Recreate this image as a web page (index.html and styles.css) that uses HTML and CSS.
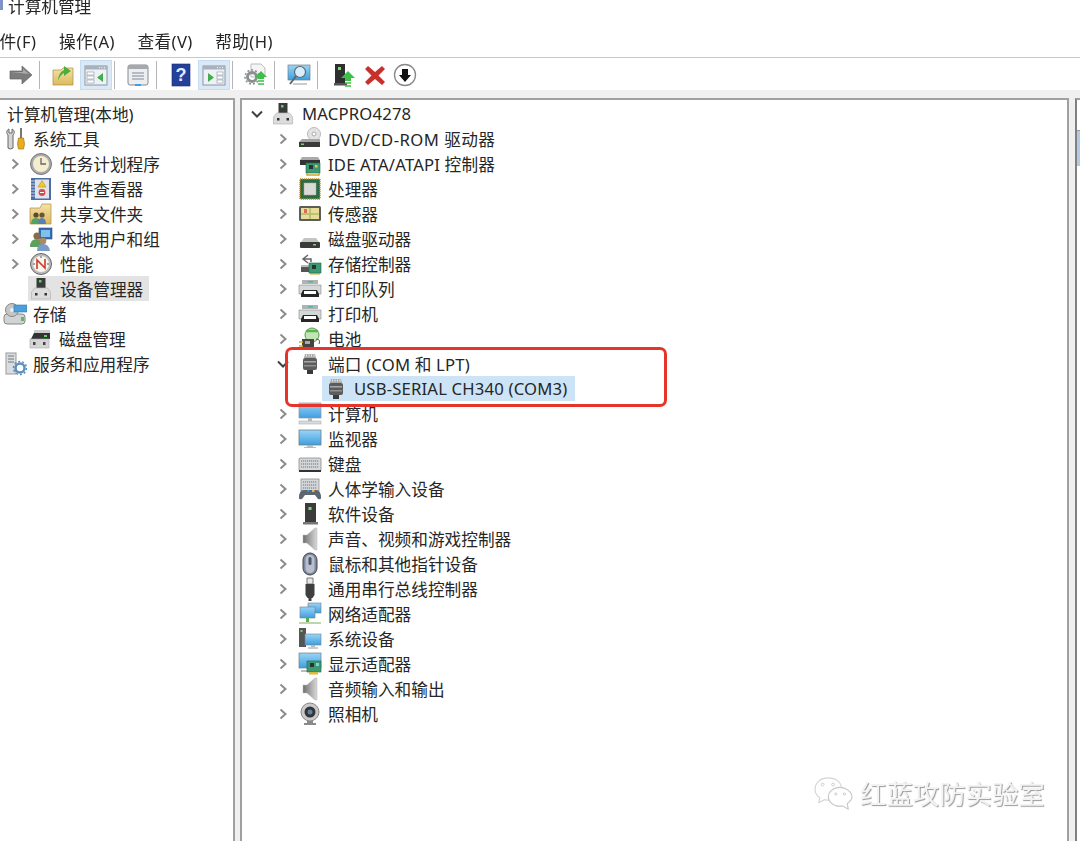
FILE: index.html
```html
<!DOCTYPE html>
<html lang="zh-CN">
<head>
<meta charset="utf-8">
<title>计算机管理</title>
<link rel="stylesheet" href="styles.css">
</head>
<body>
<svg class="sprite" xmlns="http://www.w3.org/2000/svg">
  <defs>
    <linearGradient id="gBlue" x1="0" y1="0" x2="0" y2="1"><stop offset="0" stop-color="#9ad4f5"/><stop offset="1" stop-color="#3d9fe0"/></linearGradient>
    <linearGradient id="gGray" x1="0" y1="0" x2="1" y2="0"><stop offset="0" stop-color="#6e6e6e"/><stop offset=".6" stop-color="#b0b0b0"/><stop offset="1" stop-color="#d8d8d8"/></linearGradient>
    <linearGradient id="gFolder" x1="0" y1="0" x2="0" y2="1"><stop offset="0" stop-color="#f3e2a8"/><stop offset="1" stop-color="#dcb95f"/></linearGradient>
  </defs>
  <symbol id="chev" viewBox="0 0 16 16"><path d="M5.500 3.500 10.500 8 5.500 12.500" fill="none" stroke="#8c8c8c" stroke-width="2"/></symbol>
  <symbol id="chevd" viewBox="0 0 16 16"><path d="M3 5.500 8 10.500 13 5.500" fill="none" stroke="#404040" stroke-width="2"/></symbol>

  <symbol id="computer" viewBox="0 0 24 24"><rect x="7.500" y="1" width="9" height="10" fill="#3a3a3a"/><rect x="10" y="3" width="2.500" height="2.500" fill="#5fd35f"/><path d="M2.500 22v-7l3-4h13l3 4v7z" fill="#dcdcdc" stroke="#b5b5b5" stroke-width=".7"/><rect x="6" y="16" width="2.500" height="2.500" fill="#333"/><rect x="15.500" y="16" width="2.500" height="2.500" fill="#333"/></symbol>
  <symbol id="tools" viewBox="0 0 24 24"><path d="M6 2C3.500 3 3 6 5 8v13q2.500 2 5 0V8c2-2 1.500-5-1-6v4H6z" fill="#d4d4d4" stroke="#666"/><rect x="17" y="1" width="2" height="10" fill="#777"/><path d="M15.500 11h5l1 6-1 5h-5l-1-5z" fill="#e9ad1f" stroke="#a87710" stroke-width=".7"/></symbol>
  <symbol id="clock" viewBox="0 0 24 24"><circle cx="12" cy="12" r="10.500" fill="#aaa" stroke="#777"/><circle cx="12" cy="12" r="8" fill="#f6edd0"/><path d="M12 6v6h5" fill="none" stroke="#666" stroke-width="1.300"/></symbol>
  <symbol id="log" viewBox="0 0 24 24"><rect x="2" y="1" width="20" height="22" fill="#4d6da8"/><rect x="6" y="2.500" width="14" height="19" fill="#dfe4ea"/><path d="M2 4h4M2 7h4M2 10h4M2 13h4M2 16h4M2 19h4" stroke="#c9d0dd" stroke-width="1"/><path d="M13 3.500 17 10H9z" fill="#f1c832" stroke="#a58a10" stroke-width=".5"/><circle cx="13" cy="15.500" r="3.400" fill="#d64b4b"/><rect x="11" y="15" width="4" height="1" fill="#fff"/></symbol>
  <symbol id="share" viewBox="0 0 24 24"><path d="M1 22V6h10l2-4h9v20z" fill="url(#gFolder)" stroke="#b08d3c" stroke-width=".7"/><circle cx="7" cy="13" r="2.600" fill="#5a4a2f"/><path d="M2 22q0-6 5-6t5 6z" fill="#54a35c"/><circle cx="13" cy="13" r="2.600" fill="#6a553a"/><path d="M9 22q0-6 4-6t4 6z" fill="#5b7fb5"/></symbol>
  <symbol id="users" viewBox="0 0 24 24"><rect x="10" y="1" width="13" height="11" fill="#2e6fbd" stroke="#446" stroke-width=".6"/><rect x="12" y="3" width="9" height="7" fill="#7fc0ee"/><circle cx="8" cy="9" r="3.600" fill="#8a6a4a"/><path d="M1 20q0-8 7-8t7 8z" fill="#5ea05a"/><circle cx="14" cy="14" r="3.300" fill="#b08a5f"/><path d="M8 24q0-7 6-7t7 7z" fill="#7a9ac8"/></symbol>
  <symbol id="perf" viewBox="0 0 24 24"><circle cx="12" cy="12" r="10.500" fill="#bbb" stroke="#666"/><circle cx="12" cy="12" r="8" fill="#f6f6ee"/><path d="M8 17V8l8 8V7" fill="none" stroke="#cc3a30" stroke-width="1.600"/><path d="M12 4v2M4 12h2M20 12h-2" stroke="#555"/></symbol>
  <symbol id="storage" viewBox="0 0 24 24"><rect x="1" y="12" width="21" height="10" rx="3" fill="#d0d4d4" stroke="#888"/><circle cx="9" cy="8" r="6.500" fill="#c6c6c6" stroke="#888"/><circle cx="9" cy="8" r="2" fill="#eee"/><rect x="11" y="3" width="13" height="7" fill="#4aa0dc" stroke="#2f77ad" stroke-width=".6"/><rect x="18" y="15" width="3" height="4" fill="#5fb85f"/></symbol>
  <symbol id="diskm" viewBox="0 0 24 24"><path d="M3 12l3-6h16v6z" fill="#333"/><path d="M6 3h16v3H6z" fill="#ccc"/><rect x="16" y="8" width="3" height="2" fill="#66d066"/><rect x="2" y="12" width="19" height="9" fill="#d5d5d5" stroke="#aaa" stroke-width=".6"/><rect x="5" y="15" width="2.500" height="3" fill="#444"/><rect x="15" y="15" width="2.500" height="3" fill="#444"/></symbol>
  <symbol id="services" viewBox="0 0 24 24"><rect x="3" y="1" width="10" height="21" fill="#d9dde0" stroke="#999"/><path d="M5 4h6M5 7h6M5 10h6" stroke="#777"/><circle cx="17" cy="16" r="4.500" fill="none" stroke="#5d8fc0" stroke-width="2.500"/><circle cx="17" cy="16" r="6.500" fill="none" stroke="#5d8fc0" stroke-width="1.500" stroke-dasharray="2 2"/></symbol>

  <symbol id="dvd" viewBox="0 0 24 24"><circle cx="16" cy="7" r="6.500" fill="#e3e3e3" stroke="#bbb"/><circle cx="16" cy="7" r="2" fill="#fff" stroke="#aaa"/><path d="M1 15l3-3h18v3z" fill="#a5a5a5"/><rect x="1" y="15" width="21" height="5" fill="#3a3a3a"/><rect x="3" y="16.500" width="3" height="1.500" fill="#6fd66f"/></symbol>
  <symbol id="ide" viewBox="0 0 24 24"><path d="M2 8l2-3h16l2 3z" fill="#aaa"/><rect x="2" y="8" width="20" height="5" fill="#333"/><rect x="8" y="11" width="14" height="10" fill="#3b9a72" stroke="#1f6a4a" stroke-width=".6"/><rect x="11" y="13" width="4" height="4" fill="#24343a"/><rect x="17" y="13" width="2.500" height="2.500" fill="#e8c53c"/><path d="M9 21v2h12v-2" fill="none" stroke="#c9a32d" stroke-width="1.500"/></symbol>
  <symbol id="cpu" viewBox="0 0 24 24"><rect x="2" y="2" width="20" height="20" fill="#2c6a45" stroke="#b58f2a" stroke-width="1.400" stroke-dasharray="1.300 .7"/><rect x="6" y="6" width="12" height="12" fill="#d9d9d5" stroke="#aaa" stroke-width=".5"/></symbol>
  <symbol id="sensor" viewBox="0 0 24 24"><rect x="1" y="4" width="22" height="15" rx="1.500" fill="#5d5d55"/><rect x="3" y="6" width="18" height="11" fill="#e9dc98"/><path d="M3 12h18M12 6v11" stroke="#a8bd6a" stroke-width="1.500"/><rect x="6" y="7" width="3" height="4" fill="#e06a5a"/></symbol>
  <symbol id="disk" viewBox="0 0 24 24"><path d="M3 15l3-4h12l3 4z" fill="#c4c4c4"/><rect x="2" y="15" width="20" height="6" rx="1" fill="#3a3a3a"/><rect x="15" y="17" width="3" height="1.500" fill="#6fd66f"/></symbol>
  <symbol id="storctl" viewBox="0 0 24 24"><path d="M10 3 5 7l5 4M5 7h8v3" fill="none" stroke="#666" stroke-width="1.500"/><path d="M3 15h12v5H3z" fill="#555"/><path d="M3 13h12v2H3z" fill="#bbb"/><rect x="11" y="11" width="12" height="10" fill="#3b9a72" stroke="#1f6a4a" stroke-width=".6"/><rect x="14" y="13" width="4" height="4" fill="#24343a"/><rect x="12" y="21" width="10" height="1.500" fill="#c9a32d"/></symbol>
  <symbol id="printer" viewBox="0 0 24 24"><path d="M4 7V3h16v4z" fill="#aeb4b6"/><rect x="10" y="4" width="5" height="1.500" fill="#59b0a0"/><path d="M1 8h22v9H1z" fill="#d4d8d8" stroke="#888" stroke-width=".6"/><path d="M5 13h14l2 4v3H3v-3z" fill="#262626"/><rect x="6" y="14" width="12" height="3" fill="#fff"/></symbol>
  <symbol id="battery" viewBox="0 0 24 24"><circle cx="14" cy="8" r="7" fill="#bfe6b4" stroke="#5c9a52"/><path d="M8 4h12" stroke="#5fb04f" stroke-width="2.500"/><rect x="4" y="12" width="12" height="9" fill="#444"/><rect x="7" y="14" width="5" height="3" fill="#aaa"/><path d="M1 15h4M1 19h4" stroke="#d8b32d" stroke-width="1.500"/><path d="M18 12q5 0 3 5" fill="none" stroke="#555"/></symbol>
  <symbol id="port" viewBox="0 0 24 24"><path d="M7 2h10l1 4H6z" fill="#a9a9a9"/><path d="M8.500 2.500v2M11 2.500v2M13.500 2.500v2M16 2.500v2" stroke="#eee"/><rect x="5" y="6" width="14" height="12" rx="2" fill="#5c5c5c"/><rect x="6" y="9" width="12" height="1.500" fill="#a8a8a8"/><rect x="6" y="13" width="12" height="1.500" fill="#909090"/><rect x="9" y="18" width="6" height="4" fill="#3a3a3a"/></symbol>
  <symbol id="pc" viewBox="0 0 24 24"><rect x="1" y="1" width="22" height="15" fill="url(#gBlue)" stroke="#8a97a0" stroke-width=".7"/><path d="M10 16h4v3h-4z" fill="#b5bcc0"/><rect x="1" y="19" width="22" height="3" fill="#d9dcde" stroke="#a5a5a5" stroke-width=".5"/></symbol>
  <symbol id="monitor" viewBox="0 0 24 24"><rect x="1" y="3" width="22" height="15" fill="url(#gBlue)" stroke="#6f7f8c" stroke-width=".8"/><path d="M9 18h6v2h3v1H6v-1h3z" fill="#b5bcc0"/></symbol>
  <symbol id="keyboard" viewBox="0 0 24 24"><rect x="1" y="6" width="22" height="13" rx="1" fill="#d5d8da" stroke="#808080" stroke-width=".7"/><path d="M3 9h18M3 12h18M3 15h18" stroke="#8d9296" stroke-width="1.300" stroke-dasharray="1.200 .8"/><rect x="1" y="18" width="22" height="2" fill="#333"/></symbol>
  <symbol id="hid" viewBox="0 0 24 24"><rect x="3" y="2" width="18" height="12" fill="#d5d8da" stroke="#808080" stroke-width=".7"/><path d="M5 5h14M5 8h14M5 11h14" stroke="#8d9296" stroke-width="1.300" stroke-dasharray="1.200 .8"/><path d="M1 21q0-8 5-8h12q5 0 5 8 0 2-3 1l-3-4H7l-3 4q-3 1-3-1z" fill="#5d6570"/><rect x="9" y="13" width="2.500" height="2" fill="#2f8fe0"/><rect x="14" y="13" width="2.500" height="2" fill="#e8b93c"/></symbol>
  <symbol id="soft" viewBox="0 0 24 24"><rect x="7" y="1" width="11" height="19" fill="#3c3c3c"/><rect x="10.500" y="5" width="3" height="3" fill="#6fe06f"/><rect x="5" y="20" width="15" height="2.500" fill="#777"/></symbol>
  <symbol id="speaker" viewBox="0 0 24 24"><path d="M5 8h4l8-7h2v22h-2l-8-7H5z" fill="url(#gGray)" stroke="#b5b5b5" stroke-width=".5"/></symbol>
  <symbol id="mouse" viewBox="0 0 24 24"><rect x="5" y="1" width="14" height="22" rx="7" fill="#7d8aa2" stroke="#444"/><rect x="7.500" y="3" width="9" height="18" rx="4.500" fill="#b9bfcc"/><rect x="10.500" y="5" width="3" height="8" rx="1.500" fill="#4c556a"/></symbol>
  <symbol id="usb" viewBox="0 0 24 24"><path d="M9 1h6v6H9z" fill="#e8e8e8" stroke="#777"/><path d="M7.500 7h9v11l-2 3h-5l-2-3z" fill="#3f3f3f"/><rect x="10.500" y="21" width="3" height="3" fill="#3f3f3f"/></symbol>
  <symbol id="net" viewBox="0 0 24 24"><rect x="10" y="1" width="13" height="10" fill="url(#gBlue)" stroke="#6f7f8c" stroke-width=".6"/><rect x="2" y="5" width="15" height="11" fill="url(#gBlue)" stroke="#6f7f8c" stroke-width=".6"/><path d="M9.500 16v4" stroke="#5ab04a" stroke-width="3"/><path d="M1 21h22" stroke="#bcd8aa" stroke-width="2"/></symbol>
  <symbol id="sys" viewBox="0 0 24 24"><rect x="1" y="1" width="7" height="19" fill="#555"/><rect x="2.500" y="3" width="2" height="2" fill="#6fd66f"/><rect x="7" y="7" width="16" height="11" fill="url(#gBlue)" stroke="#6f7f8c" stroke-width=".6"/><path d="M13 18h4v2h-4z" fill="#b5bcc0"/><path d="M10 21h10" stroke="#bbb" stroke-width="1.500"/></symbol>
  <symbol id="display" viewBox="0 0 24 24"><rect x="1" y="1" width="22" height="15" fill="url(#gBlue)" stroke="#6f7f8c" stroke-width=".7"/><rect x="3" y="18" width="10" height="2" fill="#bbb"/><rect x="9" y="9" width="14" height="11" fill="#3b9a72" stroke="#1f6a4a" stroke-width=".6"/><rect x="12" y="11" width="4" height="4" fill="#24343a"/><rect x="18" y="11" width="3" height="3" fill="#8cc"/><rect x="11" y="20" width="9" height="2.500" fill="#e2b935"/></symbol>
  <symbol id="cam" viewBox="0 0 24 24"><circle cx="12" cy="10" r="9" fill="#c9c9c9" stroke="#888"/><circle cx="12" cy="10" r="5.500" fill="#333"/><circle cx="12" cy="10" r="2.500" fill="#5d7fa8"/><path d="M9 19h6v2H9zM6 21h12v2H6z" fill="#8a8a8a"/></symbol>

  <symbol id="t-fwd" viewBox="0 0 24 24"><path d="M1 8h12V3l10 9-10 9v-5H1z" fill="#7c7c7c" stroke="#666" stroke-width=".7"/><path d="M2 9h12V6l6 5z" fill="#ababab"/></symbol>
  <symbol id="t-up" viewBox="0 0 24 24"><path d="M2 22V7h8l2-2h10v17z" fill="url(#gFolder)" stroke="#b08d3c" stroke-width=".7"/><path d="M7 18q0-8 6-11V3l7 5-7 5V10q-4 2-6 8z" fill="#4cae3d"/></symbol>
  <symbol id="t-tree" viewBox="0 0 24 24"><rect x="1" y="3" width="22" height="19" fill="#eef2f6" stroke="#8a96a2"/><rect x="1" y="3" width="22" height="3.500" fill="#a8b2bc"/><path d="M15 4.700h1M17.500 4.700h1M20 4.700h1" stroke="#fff"/><rect x="3" y="9" width="7" height="3" fill="#fff" stroke="#8a95a0" stroke-width=".6"/><rect x="3" y="13" width="7" height="3" fill="#fff" stroke="#8a95a0" stroke-width=".6"/><rect x="3" y="17" width="7" height="3" fill="#fff" stroke="#8a95a0" stroke-width=".6"/><path d="M19 10v9l-6-4.500z" fill="#3eb04a"/></symbol>
  <symbol id="t-props" viewBox="0 0 24 24"><rect x="2" y="2" width="20" height="20" rx="2" fill="#eceff1" stroke="#888"/><rect x="2" y="2" width="20" height="4" fill="#a5a9ad"/><path d="M6 10h12M6 13h12M6 16h12" stroke="#7e8a95" stroke-width="1.200"/><rect x="9" y="21" width="6" height="2" fill="#3f9fe0"/></symbol>
  <symbol id="t-help" viewBox="0 0 24 24"><rect x="3" y="1" width="18" height="22" fill="#23409a" stroke="#182c6c" stroke-width=".6"/><text x="12" y="18" text-anchor="middle" font-family="Liberation Sans" font-weight="700" font-size="18" fill="#e6ecff">?</text></symbol>
  <symbol id="t-act" viewBox="0 0 24 24"><rect x="1" y="3" width="22" height="19" fill="#eef2f6" stroke="#8a96a2"/><rect x="1" y="3" width="22" height="3.500" fill="#a8b2bc"/><path d="M15 4.700h1M17.500 4.700h1M20 4.700h1" stroke="#fff"/><rect x="15" y="9" width="6" height="3" fill="#fff" stroke="#8a95a0" stroke-width=".6"/><rect x="15" y="13" width="6" height="3" fill="#fff" stroke="#8a95a0" stroke-width=".6"/><rect x="15" y="17" width="6" height="3" fill="#fff" stroke="#8a95a0" stroke-width=".6"/><path d="M6 10v9l6-4.500z" fill="#3eb04a"/></symbol>
  <symbol id="t-export" viewBox="0 0 24 24"><path d="M7 1h10l4 4v9H7z" fill="#f5f5f5" stroke="#bbb"/><circle cx="8" cy="14" r="4.500" fill="none" stroke="#8a8f92" stroke-width="3"/><circle cx="8" cy="14" r="7" fill="none" stroke="#8a8f92" stroke-width="1.500" stroke-dasharray="2 2"/><path d="M17 8l6 6h-3v2h-6v-2h-3z" fill="#3fbf4a"/><path d="M14 18h6M14 21h6" stroke="#3fbf4a" stroke-width="1.500"/></symbol>
  <symbol id="t-scan" viewBox="0 0 24 24"><rect x="1" y="2" width="22" height="15" fill="url(#gBlue)" stroke="#6f7f8c" stroke-width=".7"/><circle cx="13" cy="9" r="5.500" fill="#d8eefa" stroke="#5c6870" stroke-width="1.200"/><path d="M9 13l-6 8" stroke="#5c6870" stroke-width="2"/><path d="M6 21h14" stroke="#b5bcc0" stroke-width="1.500"/></symbol>
  <symbol id="t-update" viewBox="0 0 24 24"><rect x="3" y="1" width="10" height="19" fill="#2f2f2f"/><rect x="6" y="4" width="3" height="3" fill="#6fe06f"/><rect x="2" y="20" width="13" height="2.500" fill="#555"/><path d="M16 8l7 7h-4v3h-6v-3h-4z" fill="#3fbf4a"/><path d="M13 20h6M13 23h6" stroke="#3fbf4a" stroke-width="1.500"/></symbol>
  <symbol id="t-del" viewBox="0 0 24 24"><path d="M5 3l7 6 7-6 3 3-6.500 6.500L22 19l-3 3-7-6-7 6-3-3 6.500-6.500L2 6z" fill="#c9302a"/></symbol>
  <symbol id="t-down" viewBox="0 0 24 24"><circle cx="12" cy="12" r="10.500" fill="#fff" stroke="#888" stroke-width="1.300"/><path d="M9 6h6v6h3l-6 7-6-7h3z" fill="#111"/></symbol>
  <symbol id="wechat" viewBox="0 0 44 38"><path d="M16 2C8 2 2 7 2 14c0 4 2 7 5 9l-1 5 6-3q2 .5 4 .5c8 0 14-5 14-12S24 2 16 2z" fill="#fff" stroke="#d4d4d4" stroke-width="1.200"/><path d="M28 12c-7 0-12 5-12 10s5 10 12 10q2 0 3-.5l6 3.500-1-6c3-2 5-4 5-7 0-5-6-10-13-10z" fill="#fff" stroke="#c8c8c8" stroke-width="1.200"/><circle cx="10" cy="9" r="1.500" fill="none" stroke="#ccc"/><circle cx="21" cy="9" r="1.500" fill="none" stroke="#ccc"/><circle cx="24" cy="19" r="1.200" fill="none" stroke="#ccc"/><circle cx="33" cy="19" r="1.200" fill="none" stroke="#ccc"/></symbol>
</svg>

<div class="app">
  <header class="titlebar"><span class="title-ico"></span><span>计算机管理</span></header>
  <nav class="menubar">
    <span>文件(F)</span><span>操作(A)</span><span>查看(V)</span><span>帮助(H)</span>
  </nav>
  <div class="toolbar">
    <span class="btn"><svg><use href="#t-fwd"/></svg></span>
    <i class="sep"></i>
    <span class="btn"><svg><use href="#t-up"/></svg></span>
    <span class="btn on"><svg><use href="#t-tree"/></svg></span>
    <i class="sep"></i>
    <span class="btn"><svg><use href="#t-props"/></svg></span>
    <i class="sep wide"></i>
    <span class="btn"><svg><use href="#t-help"/></svg></span>
    <span class="btn on"><svg><use href="#t-act"/></svg></span>
    <i class="sep"></i>
    <span class="btn"><svg><use href="#t-export"/></svg></span>
    <i class="sep wide"></i>
    <span class="btn"><svg><use href="#t-scan"/></svg></span>
    <i class="sep widest"></i>
    <span class="btn"><svg><use href="#t-update"/></svg></span>
    <span class="btn tight"><svg><use href="#t-del"/></svg></span>
    <span class="btn tight"><svg><use href="#t-down"/></svg></span>
  </div>

  <main class="panes">
    <aside class="pane left">
      <div class="row l-root"><span>计算机管理(本地)</span></div>
      <div class="row l-1"><svg class="ico"><use href="#tools"/></svg><span>系统工具</span></div>
      <div class="row l-2"><svg class="chev"><use href="#chev"/></svg><svg class="ico"><use href="#clock"/></svg><span>任务计划程序</span></div>
      <div class="row l-2"><svg class="chev"><use href="#chev"/></svg><svg class="ico"><use href="#log"/></svg><span>事件查看器</span></div>
      <div class="row l-2"><svg class="chev"><use href="#chev"/></svg><svg class="ico"><use href="#share"/></svg><span>共享文件夹</span></div>
      <div class="row l-2"><svg class="chev"><use href="#chev"/></svg><svg class="ico"><use href="#users"/></svg><span>本地用户和组</span></div>
      <div class="row l-2"><svg class="chev"><use href="#chev"/></svg><svg class="ico"><use href="#perf"/></svg><span>性能</span></div>
      <div class="row l-3"><div class="sel gray"><svg class="ico"><use href="#computer"/></svg><span>设备管理器</span></div></div>
      <div class="row l-1"><svg class="ico"><use href="#storage"/></svg><span>存储</span></div>
      <div class="row l-3"><div class="sel"><svg class="ico"><use href="#diskm"/></svg><span>磁盘管理</span></div></div>
      <div class="row l-1"><svg class="ico"><use href="#services"/></svg><span>服务和应用程序</span></div>
    </aside>

    <section class="pane tree">
      <div class="row t-0"><svg class="chev"><use href="#chevd"/></svg><svg class="ico"><use href="#computer"/></svg><span class="lat">MACPRO4278</span></div>
      <div class="row t-1"><svg class="chev"><use href="#chev"/></svg><svg class="ico"><use href="#dvd"/></svg><span class="lat-wide">DVD/CD-ROM 驱动器</span></div>
      <div class="row t-1"><svg class="chev"><use href="#chev"/></svg><svg class="ico"><use href="#ide"/></svg><span class="lat">IDE ATA/ATAPI 控制器</span></div>
      <div class="row t-1"><svg class="chev"><use href="#chev"/></svg><svg class="ico"><use href="#cpu"/></svg><span>处理器</span></div>
      <div class="row t-1"><svg class="chev"><use href="#chev"/></svg><svg class="ico"><use href="#sensor"/></svg><span>传感器</span></div>
      <div class="row t-1"><svg class="chev"><use href="#chev"/></svg><svg class="ico"><use href="#disk"/></svg><span>磁盘驱动器</span></div>
      <div class="row t-1"><svg class="chev"><use href="#chev"/></svg><svg class="ico"><use href="#storctl"/></svg><span>存储控制器</span></div>
      <div class="row t-1"><svg class="chev"><use href="#chev"/></svg><svg class="ico"><use href="#printer"/></svg><span>打印队列</span></div>
      <div class="row t-1"><svg class="chev"><use href="#chev"/></svg><svg class="ico"><use href="#printer"/></svg><span>打印机</span></div>
      <div class="row t-1"><svg class="chev"><use href="#chev"/></svg><svg class="ico"><use href="#battery"/></svg><span>电池</span></div>
      <div class="row t-1"><svg class="chev"><use href="#chevd"/></svg><svg class="ico"><use href="#port"/></svg><span class="lat">端口 (COM 和 LPT)</span></div>
      <div class="row t-2"><div class="sel blue"><svg class="ico"><use href="#port"/></svg><span class="lat">USB-SERIAL CH340 (COM3)</span></div></div>
      <div class="row t-1"><svg class="chev"><use href="#chev"/></svg><svg class="ico"><use href="#pc"/></svg><span>计算机</span></div>
      <div class="row t-1"><svg class="chev"><use href="#chev"/></svg><svg class="ico"><use href="#monitor"/></svg><span>监视器</span></div>
      <div class="row t-1"><svg class="chev"><use href="#chev"/></svg><svg class="ico"><use href="#keyboard"/></svg><span>键盘</span></div>
      <div class="row t-1"><svg class="chev"><use href="#chev"/></svg><svg class="ico"><use href="#hid"/></svg><span>人体学输入设备</span></div>
      <div class="row t-1"><svg class="chev"><use href="#chev"/></svg><svg class="ico"><use href="#soft"/></svg><span>软件设备</span></div>
      <div class="row t-1"><svg class="chev"><use href="#chev"/></svg><svg class="ico"><use href="#speaker"/></svg><span>声音、视频和游戏控制器</span></div>
      <div class="row t-1"><svg class="chev"><use href="#chev"/></svg><svg class="ico"><use href="#mouse"/></svg><span>鼠标和其他指针设备</span></div>
      <div class="row t-1"><svg class="chev"><use href="#chev"/></svg><svg class="ico"><use href="#usb"/></svg><span>通用串行总线控制器</span></div>
      <div class="row t-1"><svg class="chev"><use href="#chev"/></svg><svg class="ico"><use href="#net"/></svg><span>网络适配器</span></div>
      <div class="row t-1"><svg class="chev"><use href="#chev"/></svg><svg class="ico"><use href="#sys"/></svg><span>系统设备</span></div>
      <div class="row t-1"><svg class="chev"><use href="#chev"/></svg><svg class="ico"><use href="#display"/></svg><span>显示适配器</span></div>
      <div class="row t-1"><svg class="chev"><use href="#chev"/></svg><svg class="ico"><use href="#speaker"/></svg><span>音频输入和输出</span></div>
      <div class="row t-1"><svg class="chev"><use href="#chev"/></svg><svg class="ico"><use href="#cam"/></svg><span>照相机</span></div>
      <div class="callout"></div>
    </section>

    <aside class="pane actions"><div class="actions-head"></div></aside>
  </main>
</div>

<div class="watermark"><svg class="wm-ico"><use href="#wechat"/></svg><span>红蓝攻防实验室</span></div>
</body>
</html>
```

FILE: styles.css
```css
* { box-sizing: border-box; }
html, body { margin: 0; height: 841px; overflow: hidden; background: #fff; }
body {
  position: relative;
  font-family: "Noto Sans", "Noto Sans CJK SC", sans-serif;
  font-size: 16.67px;
  color: #262626;
}
.sprite { position: absolute; width: 0; height: 0; }

.app {
  display: flex;
  flex-direction: column;
  height: 841px;
  width: 1080px;
  overflow: hidden;
  filter: blur(0.35px);
}

.titlebar {
  flex: 0 0 28px;
  display: flex;
  align-items: flex-start;
  gap: 5px;
  line-height: 13px;
}
.title-ico { width: 3px; height: 10px; background: #7f93c8; }

.menubar {
  flex: 0 0 30px;
  display: flex;
  align-items: center;
  gap: 22.5px;
  margin-left: -17.5px;
  border-bottom: 1px solid #c8c8c8;
  padding-bottom: 1px;
  line-height: 26px;
  letter-spacing: 0.4px;
}

.toolbar {
  flex: 0 0 32px;
  display: flex;
  align-items: center;
  padding: 2px 0 0 5px;
}
.btn {
  width: 32px;
  height: 30px;
  display: flex;
  align-items: center;
  justify-content: center;
  border: 1px solid transparent;
}
.btn svg { width: 24px; height: 24px; }
.btn.on { background: #dbe9f6; border-color: #c5dcf1; margin-left: 1px; }
.btn.tight { width: 30px; }
.sep { width: 1px; height: 28px; background: #b5b5b5; margin: 0 7px 0 2px; }
.sep.wide { margin-right: 8px; }
.sep.widest { margin-right: 10px; }

.panes {
  flex: 1;
  display: flex;
  gap: 5px;
  background: #f0f0f0;
  padding-top: 8px;
  min-height: 0;
}
.pane {
  background: #fff;
  border-top: 2px solid #a0a0a0;
  padding-top: 1px;
}
.left { width: 235px; border-right: 2px solid #a0a0a0; flex: none; }
.tree {
  position: relative;
  width: 829px;
  flex: none;
  border-left: 2px solid #a0a0a0;
  border-right: 2px solid #a0a0a0;
}
.actions { flex: 1; margin-left: 1px; border-left: 2px solid #808080; padding-top: 30px; }
.actions-head { height: 36px; background: #b4c9e4; border-top: 1px solid #999; }

.row {
  display: flex;
  align-items: center;
  height: 25.04px;
  white-space: nowrap;
}
.chev { width: 16px; height: 16px; flex: none; margin-right: 6px; }
.ico { width: 24px; height: 24px; flex: none; margin-right: 6px; }
.sel { display: flex; align-items: center; height: 25px; }
.sel.gray { background: #e3e3e3; padding: 0 6px 0 1px; }
.sel.blue { background: #cde3f6; padding: 0 8px 0 2px; }
.lat { letter-spacing: 0.18px; }
.lat-wide { letter-spacing: 0.45px; }

.l-root { padding-left: 7px; }
.l-1 { padding-left: 3px; }
.l-2 { padding-left: 7px; }
.l-2 .ico { margin-right: 7px; }
.l-3 { padding-left: 28px; }
.l-3 .ico { margin-right: 7px; }

.t-0 { padding-left: 7px; }
.t-0 .ico { margin-right: 7px; }
.t-1 { padding-left: 33px; }
.t-1 .chev { margin-right: 7px; }
.t-2 { padding-left: 80px; }

.callout {
  position: absolute;
  left: 43px;
  top: 247px;
  width: 382px;
  height: 60px;
  border: 3.5px solid #e5352b;
  border-radius: 7px;
}

.watermark {
  position: absolute;
  left: 813px;
  top: 776px;
  display: flex;
  align-items: center;
  gap: 5px;
  font-size: 26.4px;
  line-height: 36px;
  color: #f3f3f3;
  text-shadow: 1px 1px 1px #9a9a9a;
}
.wm-ico { width: 42px; height: 36px; }
```
